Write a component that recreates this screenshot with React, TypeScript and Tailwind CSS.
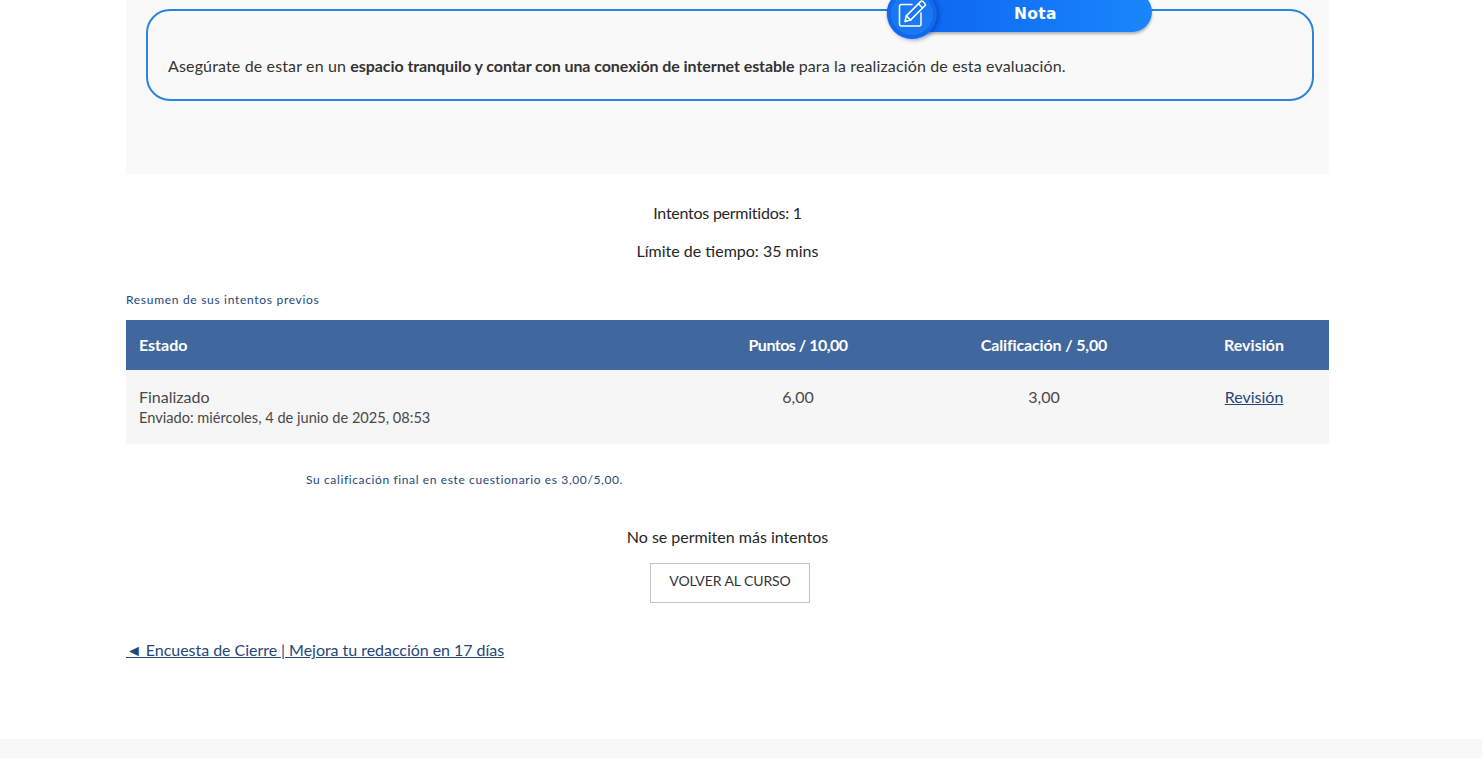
const font = { fontFamily: 'Lato, "Open Sans", sans-serif' }

function NoteIcon() {
  return (
    <svg viewBox="0 0 30 30" className="h-[30px] w-[30px]" fill="none" stroke="white" strokeWidth="1.5" strokeLinejoin="round" strokeLinecap="round">
      <path d="M15 5.5H4.5a2 2 0 0 0-2 2V25a2 2 0 0 0 2 2H22a2 2 0 0 0 2-2V14" />
      <path d="M8 22.5l1.3-5.6L23.6 2.6a1.6 1.6 0 0 1 2.3 0l1.9 1.9a1.6 1.6 0 0 1 0 2.3L13.5 21.1z" />
      <path d="M9.3 16.9l4.2 4.2M21.4 4.8l4.2 4.2" />
    </svg>
  )
}

function NoteBox() {
  return (
    <div className="relative h-[92px] rounded-[24px] border-2 border-[#2b84dc] px-[20px] pt-[43px]">
      <div className="absolute left-[739px] top-[-19px] flex h-[40px] w-[265px] items-center rounded-[20px] bg-gradient-to-r from-[#0f62f0] to-[#1a86fb] shadow-[0_2px_3px_rgba(0,0,0,0.3)]">
        <div className="absolute left-0 top-[-3px] flex h-[50px] w-[50px] items-center justify-center rounded-full bg-[#1068ee] shadow-[2px_1px_4px_rgba(0,40,140,0.45)]">
          <div className="flex h-[42px] w-[42px] items-center justify-center rounded-full bg-[#1a78f5]">
            <NoteIcon />
          </div>
        </div>
        <span className="ml-[127px] translate-y-[3px] text-[15.5px] font-bold tracking-[0.3px] text-white" style={{ fontFamily: '"DejaVu Sans", sans-serif' }}>Nota</span>
      </div>
      <p className="text-[16px] leading-[24px] tracking-[0.14px] text-[#333333]">
        Asegúrate de estar en un <b className="font-bold tracking-[-0.07px]">espacio tranquilo y contar con una conexión de internet estable</b> para la realización de esta evaluación.
      </p>
    </div>
  )
}

function Attempts() {
  return (
    <table className="w-[1203px] table-fixed border-collapse">
      <thead>
        <tr className="h-[50px] bg-[#41689e] text-[16px] font-bold text-white">
          <th className="w-[561px] pl-[13px] text-left">Estado</th>
          <th className="w-[222px] text-center tracking-[-0.5px]">Puntos / 10,00</th>
          <th className="w-[270px] text-center tracking-[-0.15px]">Calificación / 5,00</th>
          <th className="w-[150px] text-center">Revisión</th>
        </tr>
      </thead>
      <tbody>
        <tr className="h-[74px] bg-[#f6f6f6] align-top text-[16px] text-[#494949]">
          <td className="pl-[13px] pt-[15px]">
            <div className="leading-[23px]">Finalizado</div>
            <div className="text-[14.6px] leading-[20px]">Enviado: miércoles, 4 de junio de 2025, 08:53</div>
          </td>
          <td className="pt-[15px] text-center leading-[23px]">6,00</td>
          <td className="pt-[15px] text-center leading-[23px]">3,00</td>
          <td className="pt-[15px] text-center leading-[23px]">
            <a href="#" className="text-[#24477a] underline">Revisión</a>
          </td>
        </tr>
      </tbody>
    </table>
  )
}

export default function App() {
  return (
    <div className="flex h-[758px] flex-col overflow-hidden bg-white" style={font}>
      <main className="ml-[126px] w-[1203px] flex-1">
        <section className="h-[174px] bg-[#f9f9f9] pl-[20px] pr-[15px] pt-[9px]">
          <NoteBox />
        </section>

        <div className="pt-[27px] text-center text-[16px] leading-[24px] text-[#262626]">
          <p className="tracking-[-0.25px]">Intentos permitidos: 1</p>
          <p className="mt-[14px]">Límite de tiempo: 35 mins</p>
        </div>

        <h3 className="mt-[28px] text-[12px] leading-[18px] tracking-[0.7px] text-[#24477a]">Resumen de sus intentos previos</h3>
        <div className="mt-[11px]">
          <Attempts />
        </div>

        <p className="ml-[180px] mt-[27px] text-[12px] leading-[18px] tracking-[0.62px] text-[#24477a]">
          Su calificación final en este cuestionario es 3,00/5,00.
        </p>

        <p className="mt-[36px] text-center text-[16px] leading-[24px] text-[#262626]">No se permiten más intentos</p>
        <div className="mt-[14px] ml-[524px]">
          <button className="h-[40px] w-[160px] border border-[#c4c4c4] bg-white pb-[6px] text-[14px] tracking-[-0.1px] text-[#333333]">VOLVER AL CURSO</button>
        </div>

        <a href="#" className="mt-[35px] inline-block text-[16px] leading-[24px] tracking-[-0.04px] text-[#24477a] underline">
          ◄ Encuesta de Cierre | Mejora tu redacción en 17 días
        </a>
      </main>
      <footer className="h-[19px] bg-[#f8f8f8]" />
    </div>
  )
}
